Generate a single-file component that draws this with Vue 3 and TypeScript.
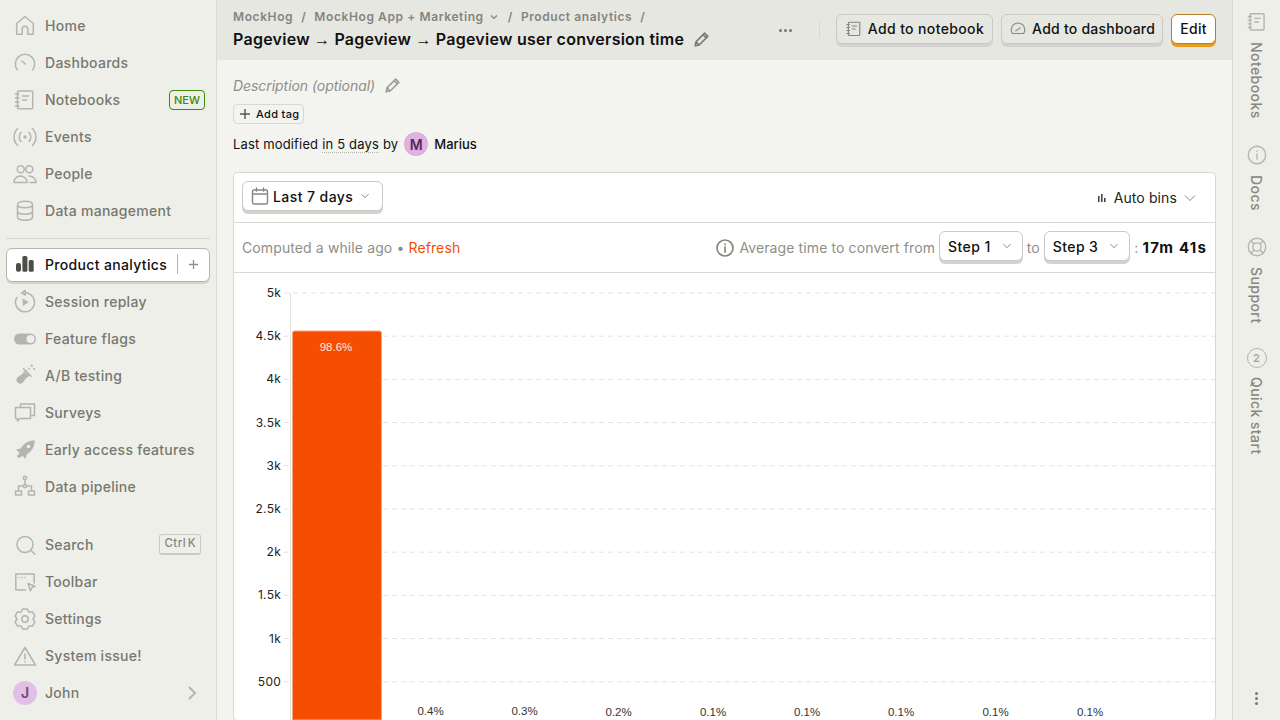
<script setup lang="ts">
interface Icon {
  d?: string
  solid?: string
}

interface NavItem {
  label: string
  icon: Icon
}

const notebookIcon: Icon = {
  d: 'M5.5 3H18.7a1 1 0 0 1 1 1v15.7a1 1 0 0 1-1 1H5.5a1 1 0 0 1-1-1V4a1 1 0 0 1 1-1zM2.5 6h3.5M2.5 10h3.5M2.5 14h3.5M2.5 18h3.5M9.5 8h6M9.5 12h4',
}

const topItems: NavItem[] = [
  { label: 'Home', icon: { d: 'M3.7 20.3V9.5L12 2.5l8.3 7v10.8h-5.5V15a2.8 2.8 0 0 0-5.6 0v5.3z' } },
  { label: 'Dashboards', icon: { d: 'M4.4 19a9.7 9.7 0 1 1 15.2 0M8.7 10l3.6 3' } },
  { label: 'Notebooks', icon: notebookIcon },
  {
    label: 'Events',
    icon: {
      d: 'M8 7.5a6.5 6.5 0 0 0 0 9M16 7.5a6.5 6.5 0 0 1 0 9M4.6 3.5a12 12 0 0 0 0 17M19.4 3.5a12 12 0 0 1 0 17',
      solid: 'M12 10.3a1.7 1.7 0 1 0 0 3.4 1.7 1.7 0 0 0 0-3.4z',
    },
  },
  {
    label: 'People',
    icon: {
      d: 'M7.7 3.8a3.5 3.5 0 1 0 0 7 3.5 3.5 0 0 0 0-7zM16.3 3.8a3.5 3.5 0 1 0 0 7 3.5 3.5 0 0 0 0-7zM1 20.5c0-4 3-6.5 6.5-6.5s6.5 2.5 6.5 6.5zM16 14c3.5 0 7 2.5 7 6.5h-6',
    },
  },
  {
    label: 'Data management',
    icon: {
      d: 'M4.5 5.5c0-2 3.4-3.2 7.5-3.2s7.5 1.2 7.5 3.2-3.4 3.2-7.5 3.2-7.5-1.2-7.5-3.2zM4.5 5.5V18c0 2 3.4 3.2 7.5 3.2s7.5-1.2 7.5-3.2V5.5M4.5 12c0 2 3.4 3.2 7.5 3.2s7.5-1.2 7.5-3.2',
    },
  },
]

const midItems: NavItem[] = [
  {
    label: 'Session replay',
    icon: {
      d: 'M12 2.8a9.5 9.5 0 1 1-8.2 4.7M12.2.5v4.6L8.6 2.8z',
      solid: 'M9.7 8.5l6 3.8-6 3.8z',
    },
  },
  {
    label: 'Feature flags',
    icon: { solid: 'M6.5 6.5h11a5.5 5.5 0 0 1 0 11h-11a5.5 5.5 0 0 1 0-11zM17.5 8a4 4 0 1 0 0 8 4 4 0 0 0 0-8z' },
  },
  {
    label: 'A/B testing',
    icon: {
      d: 'M10.5 4.8l7.5 7.5M13 6.5l-2 2M16.3 10.5l-2.5 2.5',
      solid: 'M10.5 9h6l-6.8 9.8a3.8 3.8 0 0 1-5.6-5zM18.8.6a1.1 1.1 0 1 0 0 2.2 1.1 1.1 0 0 0 0-2.2zM21.2 4a1 1 0 1 0 0 2 1 1 0 0 0 0-2zM16.2 3.8a.9.9 0 1 0 0 1.8.9.9 0 0 0 0-1.8z',
    },
  },
  {
    label: 'Surveys',
    icon: { d: 'M7.5 6V3h14v11.5H18M2.5 6.5h15v11H7l-2.5 2.5v-2.5h-2z' },
  },
  {
    label: 'Early access features',
    icon: {
      solid: 'M21.8 2.2c-6.3.2-11 3-14 8.2L3 11.5l3.4 3.4-2.5 3.3 2 2 3.3-2.5 3.4 3.4 1.2-4.8c5.2-3 7.8-7.8 8-14.1zM15.5 6.7a1.8 1.8 0 1 0 0 3.6 1.8 1.8 0 0 0 0-3.6z',
    },
  },
  {
    label: 'Data pipeline',
    icon: {
      d: 'M12 1.3a1.6 1.6 0 1 0 0 3.2 1.6 1.6 0 0 0 0-3.2zM12 4.5v5M12 9.5a1.6 1.6 0 1 0 0 3.2 1.6 1.6 0 0 0 0-3.2zM10.4 11H5.5v5M13.6 11h4.9v5M2.5 16h6v4h-6zM15.5 16h6v4h-6z',
    },
  },
]

const bottomItems: NavItem[] = [
  { label: 'Search', icon: { d: 'M12 3.5a8 8 0 1 0 0 16 8 8 0 0 0 0-16zM17.8 17.3l4 4' } },
  {
    label: 'Toolbar',
    icon: { d: 'M12.5 20H2.8V4h18.4v9M6 7.5h.1M9 7.5h.1M12 7.5h.1M15 13.5l7 2.7-3 1.3-1.5 3.2z' },
  },
  {
    label: 'Settings',
    icon: {
      d: 'M9.7 2h4.6L16 5.07 19.53 4.98 21.85 8.99 20 12 21.85 15.01 19.53 19.02 16 18.93 14.3 22H9.7L8 18.93 4.47 19.02 2.15 15.01 4 12 2.15 8.99 4.47 4.98 8 5.07zM12 8.8a3.2 3.2 0 1 0 0 6.4 3.2 3.2 0 0 0 0-6.4z',
    },
  },
  { label: 'System issue!', icon: { d: 'M12 3.5L22.5 21h-21zM12 10v5M12 17.7v.3' } },
]

const rightItems = [
  { label: 'Notebooks', icon: notebookIcon },
  {
    label: 'Docs',
    icon: { d: 'M12 2.5a9.5 9.5 0 1 0 0 19 9.5 9.5 0 0 0 0-19zM12 11v5.5M12 7.7v.3' },
  },
  {
    label: 'Support',
    icon: {
      d: 'M12 2.5a9.5 9.5 0 1 0 0 19 9.5 9.5 0 0 0 0-19zM12 7.5a4.5 4.5 0 1 0 0 9 4.5 4.5 0 0 0 0-9zM5.3 5.3l3.5 3.5M18.7 5.3l-3.5 3.5M5.3 18.7l3.5-3.5M18.7 18.7l-3.5-3.5',
    },
  },
]

const ticks = ['5k', '4.5k', '4k', '3.5k', '3k', '2.5k', '2k', '1.5k', '1k', '500'].map((label, i) => ({
  label,
  y: 20 + i * 43.2,
}))

const bins = [
  { label: '0.4%', x: 196.5, y: 442 },
  { label: '0.3%', x: 290.5, y: 442 },
  { label: '0.2%', x: 384.5, y: 443 },
  { label: '0.1%', x: 479, y: 443 },
  { label: '0.1%', x: 573, y: 443 },
  { label: '0.1%', x: 667, y: 443 },
  { label: '0.1%', x: 761.5, y: 443 },
  { label: '0.1%', x: 856, y: 443 },
]
</script>

<template>
  <div class="app">
    <aside class="sidebar">
      <nav class="nav-group">
        <a v-for="item in topItems" :key="item.label" class="nav-item">
          <svg class="nav-icon" viewBox="0 0 24 24">
            <path v-if="item.icon.d" class="line" :d="item.icon.d" />
            <path v-if="item.icon.solid" class="solid" :d="item.icon.solid" />
          </svg>
          <span>{{ item.label }}</span>
          <span v-if="item.label === 'Notebooks'" class="new-tag">NEW</span>
        </a>
      </nav>
      <div class="nav-divider"></div>
      <nav class="nav-group">
        <a class="nav-item active">
          <svg class="nav-icon" viewBox="0 0 24 24">
            <rect x="3" y="11" width="5" height="8.7" rx="2" />
            <rect x="9.4" y="4" width="5" height="15.7" rx="1.5" />
            <rect x="15.7" y="8" width="5" height="11.7" rx="1.5" />
          </svg>
          <span>Product analytics</span>
          <span class="active-side">
            <svg viewBox="0 0 12 12" class="plus"><path d="M6 1v10M1 6h10" /></svg>
          </span>
        </a>
        <a v-for="item in midItems" :key="item.label" class="nav-item">
          <svg class="nav-icon" viewBox="0 0 24 24">
            <path v-if="item.icon.d" class="line" :d="item.icon.d" />
            <path v-if="item.icon.solid" class="solid" fill-rule="evenodd" :d="item.icon.solid" />
          </svg>
          <span>{{ item.label }}</span>
        </a>
      </nav>
      <nav class="nav-group bottom">
        <a v-for="item in bottomItems" :key="item.label" class="nav-item">
          <svg class="nav-icon" viewBox="0 0 24 24">
            <path class="line" :d="item.icon.d" />
          </svg>
          <span>{{ item.label }}</span>
          <span v-if="item.label === 'Search'" class="kbd">Ctrl K</span>
        </a>
        <a class="nav-item">
          <span class="avatar small">J</span>
          <span>John</span>
          <svg class="chevron-right" viewBox="0 0 12 16"><path d="M3 2l6 6-6 6" /></svg>
        </a>
      </nav>
    </aside>

    <main class="main">
      <header class="topbar">
        <div class="titles">
          <div class="crumbs">
            <span>MockHog</span>
            <i>/</i>
            <span>MockHog App + Marketing</span>
            <svg class="crumb-caret" viewBox="0 0 10 10"><path d="M2 3.5l3 3 3-3" /></svg>
            <i>/</i>
            <span>Product analytics</span>
            <i>/</i>
          </div>
          <h1>
            <span>Pageview <span class="arrow">→</span> Pageview <span class="arrow">→</span> Pageview user conversion time</span>
            <svg class="pencil big" viewBox="0 0 24 24">
              <path d="M4 20l1-5L16 4l4 4L9 19zM14 6l4 4M5 15l4 4" />
            </svg>
          </h1>
        </div>
        <div class="actions">
          <span class="more"><b></b><b></b><b></b></span>
          <span class="action-divider"></span>
          <button class="btn">
            <svg class="btn-icon" viewBox="0 0 24 24"><path class="line dark" :d="notebookIcon.d" /></svg>
            Add to notebook
          </button>
          <button class="btn dash">
            <svg class="btn-icon" viewBox="0 0 24 24">
              <path class="line dark" d="M4.5 18a9 9 0 1 1 15 0zM9 14.5l6-4" />
            </svg>
            Add to dashboard
          </button>
          <button class="btn edit">Edit</button>
        </div>
      </header>

      <section class="content">
        <div class="description">
          Description (optional)
          <svg class="pencil" viewBox="0 0 24 24">
            <path d="M4 20l1-5L16 4l4 4L9 19zM14 6l4 4M5 15l4 4" />
          </svg>
        </div>
        <button class="add-tag">
          <svg viewBox="0 0 12 12" class="plus dark"><path d="M6 1v10M1 6h10" /></svg>
          Add tag
        </button>
        <div class="modified">
          Last modified <span class="dotted">in 5 days</span> by
          <span class="avatar">M</span>
          <span class="author">Marius</span>
        </div>

        <div class="card">
          <div class="card-row">
            <button class="select date">
              <svg class="calendar" viewBox="0 0 18 18">
                <path d="M3 3h12a1.5 1.5 0 0 1 1.5 1.5v11A1.5 1.5 0 0 1 15 17H3a1.5 1.5 0 0 1-1.5-1.5v-11A1.5 1.5 0 0 1 3 3zM1.5 7h15M5.5 1v3M12.5 1v3" />
              </svg>
              Last 7 days
              <svg class="caret" viewBox="0 0 10 10"><path d="M1.5 3.2L5 6.7l3.5-3.5" /></svg>
            </button>
            <div class="bins">
              <svg class="bins-icon" viewBox="0 0 10 10">
                <rect x="1" y="3" width="1.6" height="6" />
                <rect x="4" y="1" width="1.6" height="8" />
                <rect x="7" y="5" width="1.6" height="4" />
              </svg>
              Auto bins
              <svg class="caret wide" viewBox="0 0 12 10"><path d="M1 2.5l5 5 5-5" /></svg>
            </div>
          </div>
          <div class="card-row">
            <div class="computed">
              Computed a while ago <span class="bullet">•</span> <a class="refresh">Refresh</a>
            </div>
            <div class="conversion">
              <svg class="info" viewBox="0 0 18 18">
                <path d="M9 1a8 8 0 1 0 0 16A8 8 0 0 0 9 1zM9 8v5M9 5v.4" />
              </svg>
              <span>Average time to convert from</span>
              <button class="select step">
                Step 1
                <svg class="caret" viewBox="0 0 10 10"><path d="M1.5 3.2L5 6.7l3.5-3.5" /></svg>
              </button>
              <span>to</span>
              <button class="select step">
                Step 3
                <svg class="caret" viewBox="0 0 10 10"><path d="M1.5 3.2L5 6.7l3.5-3.5" /></svg>
              </button>
              <span>:</span>
              <strong>17m 41s</strong>
            </div>
          </div>
          <svg class="chart" viewBox="0 0 982 447">
            <g v-for="tick in ticks" :key="tick.label">
              <line class="grid" x1="50" :x2="981" :y1="tick.y" :y2="tick.y" />
              <text class="tick" x="47" :y="tick.y + 4" text-anchor="end">{{ tick.label }}</text>
            </g>
            <line class="axis" x1="56.5" x2="56.5" y1="20" y2="447" />
            <path class="bar" d="M58.5 447V60a2 2 0 0 1 2-2h85a2 2 0 0 1 2 2v387z" />
            <text class="bar-label" x="102" y="78" text-anchor="middle">98.6%</text>
            <text v-for="(bin, i) in bins" :key="i" class="bin-label" :x="bin.x" :y="bin.y" text-anchor="middle">
              {{ bin.label }}
            </text>
          </svg>
        </div>
      </section>
    </main>

    <aside class="rail">
      <div v-for="item in rightItems" :key="item.label" class="rail-item">
        <svg class="rail-icon" viewBox="0 0 24 24"><path class="line" :d="item.icon.d" /></svg>
        <span class="rail-text">{{ item.label }}</span>
      </div>
      <div class="rail-item">
        <span class="quick">2</span>
        <span class="rail-text">Quick start</span>
      </div>
      <span class="rail-more"><b></b><b></b><b></b></span>
    </aside>
  </div>
</template>

<style scoped>
.app {
  display: flex;
  height: 720px;
  overflow: hidden;
  background: #f3f4ef;
  color: #111;
  font-family: Inter, "Liberation Sans", sans-serif;
  font-size: 14px;
  letter-spacing: 0.008em;
}

button {
  font-family: inherit;
  color: inherit;
}

.sidebar {
  display: flex;
  flex-direction: column;
  flex: none;
  width: 217px;
  padding: 7px 6px 9px;
  box-sizing: border-box;
  background: #eeefe9;
  border-right: 1px solid #d8d9d3;
}

.nav-group {
  display: flex;
  flex-direction: column;
}

.nav-group.bottom {
  margin-top: auto;
}

.nav-item {
  display: flex;
  align-items: center;
  gap: 8px;
  height: 37px;
  padding: 0 5px 0 7px;
  box-sizing: border-box;
  color: #777870;
  font-weight: 500;
  letter-spacing: 0.02em;
}

.nav-icon {
  flex: none;
  width: 24px;
  height: 24px;
}

.line {
  fill: none;
  stroke: #b4b5ad;
  stroke-width: 1.5;
  stroke-linejoin: round;
  stroke-linecap: round;
}

.line.dark {
  stroke: #85867f;
}

.solid {
  fill: #b4b5ad;
}

.new-tag {
  margin-left: auto;
  padding: 0 4px;
  height: 18px;
  line-height: 18px;
  border: 1px solid #3f8a0a;
  border-radius: 4px;
  color: #3f8a0a;
  font-size: 11px;
  letter-spacing: 0;
}

.nav-divider {
  height: 1px;
  margin: 9px 0;
  background: #d8d9d3;
}

.nav-item.active {
  height: 34px;
  margin-bottom: 1px;
  padding-left: 6px;
  padding-bottom: 2px;
  background: #fff;
  color: #111;
  border: 1px solid #b5b6ae;
  border-radius: 6px;
  box-shadow: 0 2px 0 #d3d4ce;
  letter-spacing: 0.024em;
}

.nav-item.active rect {
  fill: #4d4e4a;
}

.active-side {
  display: flex;
  align-items: center;
  margin-left: auto;
  height: 20px;
  padding-left: 10px;
  padding-right: 5px;
  border-left: 1px solid #b5b6ae;
}

.plus {
  width: 11px;
  height: 11px;
}

.plus path {
  fill: none;
  stroke: #8e8f88;
  stroke-width: 1.4;
}

.plus.dark {
  width: 12px;
  height: 12px;
}

.plus.dark path {
  stroke: #555;
}

.kbd {
  margin-left: auto;
  margin-right: 4px;
  padding: 0 4px;
  height: 18px;
  line-height: 17px;
  border: 1px solid #c9cac3;
  border-bottom-width: 2px;
  border-radius: 3px;
  font-size: 11.5px;
  color: #85867f;
  letter-spacing: 0.04em;
  word-spacing: -2px;
}

.avatar {
  display: inline-flex;
  align-items: center;
  justify-content: center;
  flex: none;
  width: 24px;
  height: 24px;
  margin: 0 2px;
  border-radius: 50%;
  background: #ddb1e0;
  color: #57285c;
  font-size: 14px;
  font-weight: 600;
  letter-spacing: 0;
}

.avatar.small {
  margin: 0;
  background: #e2bfe6;
  color: #6e4772;
}

.chevron-right {
  margin-left: auto;
  margin-right: 7px;
  width: 12px;
  height: 16px;
}

.chevron-right path {
  fill: none;
  stroke: #b4b5ad;
  stroke-width: 2;
}

.main {
  display: flex;
  flex-direction: column;
  flex: 1;
  min-width: 0;
}

.topbar {
  display: flex;
  align-items: center;
  justify-content: space-between;
  flex: none;
  height: 60px;
  padding: 0 16px;
  background: #e6e7e1;
}

.crumbs {
  display: flex;
  align-items: center;
  height: 16px;
  color: #84857e;
  font-size: 12px;
  font-weight: 600;
  letter-spacing: 0.05em;
}

.crumbs i {
  margin: 0 8px;
  font-style: normal;
}

.crumb-caret {
  width: 10px;
  height: 10px;
  margin-left: 5px;
  margin-right: 1px;
}

.crumb-caret path {
  fill: none;
  stroke: #84857e;
  stroke-width: 1.2;
}

h1 {
  display: flex;
  align-items: center;
  margin: 2px 0 0;
  font-size: 16px;
  line-height: 24px;
  font-weight: 600;
  letter-spacing: 0.016em;
}

.arrow {
  font-family: "Liberation Sans", sans-serif;
  font-weight: 400;
  letter-spacing: 0;
}

.pencil {
  width: 19px;
  height: 19px;
  margin-left: 8px;
}

.pencil path {
  fill: none;
  stroke: #9b9c95;
  stroke-width: 2;
  stroke-linejoin: round;
}

.pencil.big path {
  stroke: #777870;
}

.actions {
  display: flex;
  align-items: center;
  gap: 8px;
}

.more,
.rail-more {
  display: flex;
  gap: 2px;
}

.more {
  margin-right: 19px;
}

.more b,
.rail-more b {
  width: 3px;
  height: 3px;
  border-radius: 50%;
  background: #777870;
}

.action-divider {
  width: 1px;
  height: 16px;
  margin-right: 8px;
  background: #d8d9d3;
}

.btn {
  display: flex;
  align-items: center;
  gap: 5px;
  height: 30px;
  margin-bottom: 3px;
  padding: 0 8px;
  background: transparent;
  border: 1px solid #c9cac3;
  border-radius: 6px;
  box-shadow: 0 3px 0 #d4d2d0;
  font-size: 14px;
  font-weight: 500;
  letter-spacing: 0.026em;
}

.btn.dash {
  padding: 0 7px;
  letter-spacing: 0.017em;
}

.btn-icon {
  width: 18px;
  height: 18px;
}

.btn.edit {
  background: #fff;
  border-color: #b57f2a;
  box-shadow: 0 3px 0 #e79c1f;
}

.content {
  display: flex;
  flex-direction: column;
  align-items: flex-start;
  padding: 0 16px;
}

.description {
  display: flex;
  align-items: center;
  height: 20px;
  margin-top: 15px;
  color: #8e8f88;
  font-style: italic;
  letter-spacing: -0.004em;
}

.add-tag {
  display: flex;
  align-items: center;
  gap: 5px;
  height: 20px;
  margin-top: 9px;
  padding: 0 4px 0 5px;
  background: transparent;
  border: 1px solid #d8d9d3;
  border-radius: 4px;
  font-size: 11px;
  font-weight: 500;
  letter-spacing: 0.03em;
}

.modified {
  display: flex;
  align-items: center;
  gap: 4px;
  height: 24px;
  margin-top: 8px;
  font-size: 13px;
  letter-spacing: 0.012em;
}

.dotted {
  border-bottom: 1px dotted #b4b5ad;
}

.author {
  font-weight: 500;
  letter-spacing: 0;
}

.card {
  align-self: stretch;
  flex: none;
  margin-top: 16px;
  background: #fff;
  border: 1px solid #d8d9d3;
  border-radius: 4px;
}

.card-row {
  display: flex;
  align-items: center;
  justify-content: space-between;
  height: 50px;
  padding: 0 8px;
  box-sizing: border-box;
  border-bottom: 1px solid #d8d9d3;
}

.select {
  display: flex;
  align-items: center;
  height: 30px;
  margin-bottom: 3px;
  padding: 0 12px 0 8px;
  background: #fff;
  border: 1px solid #c9cac3;
  border-radius: 6px;
  box-shadow: 0 3px 0 #d4d2d0;
  font-size: 14px;
  font-weight: 500;
  letter-spacing: 0.03em;
}

.date {
  gap: 4px;
}

.calendar {
  width: 18px;
  height: 18px;
}

.calendar path,
.info path {
  fill: none;
  stroke: #85867f;
  stroke-width: 1.4;
  stroke-linecap: round;
}

.info path {
  stroke-width: 1.7;
}

.caret {
  width: 10px;
  height: 10px;
  margin-left: 3px;
}

.caret path {
  fill: none;
  stroke: #85867f;
  stroke-width: 1;
}

.caret.wide {
  width: 12px;
  margin-left: 1px;
}

.bins {
  display: flex;
  align-items: center;
  gap: 6px;
  padding-right: 11px;
  color: #222;
}

.bins-icon {
  width: 10px;
  height: 10px;
  margin-right: 1px;
  fill: #444;
}

.computed,
.bullet {
  color: #8e8f88;
}

.refresh {
  color: #f54e00;
}

.conversion {
  display: flex;
  align-items: center;
  gap: 4px;
  color: #8e8f88;
}

.info {
  width: 18px;
  height: 18px;
  margin-right: 1px;
}

.step {
  gap: 8px;
  padding-right: 10px;
  color: #111;
}

.conversion strong {
  color: #111;
  font-size: 15px;
  font-weight: 700;
  letter-spacing: 0.08em;
}

.chart {
  display: block;
  width: 982px;
  height: 447px;
}

.grid {
  stroke: #e2e3df;
  stroke-dasharray: 5 4;
}

.axis {
  stroke: #e2e3df;
}

.tick {
  fill: #222;
  font-size: 12px;
  letter-spacing: 0.02em;
}

.bar {
  fill: #f54e00;
  stroke: #f9a57a;
}

.bar-label,
.bin-label {
  font-family: "Liberation Sans", sans-serif;
  font-size: 11.5px;
  letter-spacing: 0;
}

.bar-label {
  fill: #ffe9de;
}

.bin-label {
  fill: #333;
}

.rail {
  position: relative;
  display: flex;
  flex-direction: column;
  align-items: center;
  flex: none;
  gap: 25px;
  width: 48px;
  padding-top: 11px;
  box-sizing: border-box;
  background: #eeefe9;
  border-left: 1px solid #d8d9d3;
}

.rail-item {
  display: flex;
  flex-direction: column;
  align-items: center;
  gap: 9px;
}

.rail-icon {
  width: 22px;
  height: 22px;
}

.rail-text {
  writing-mode: vertical-rl;
  color: #85867f;
  font-weight: 500;
  letter-spacing: 0.03em;
}

.quick {
  display: flex;
  align-items: center;
  justify-content: center;
  width: 20px;
  height: 20px;
  box-sizing: border-box;
  border: 1.5px solid #b4b5ad;
  border-radius: 50%;
  color: #a5a69e;
  font-size: 11px;
  font-weight: 600;
}

.rail-more {
  position: absolute;
  bottom: 15px;
  flex-direction: column;
}
</style>
